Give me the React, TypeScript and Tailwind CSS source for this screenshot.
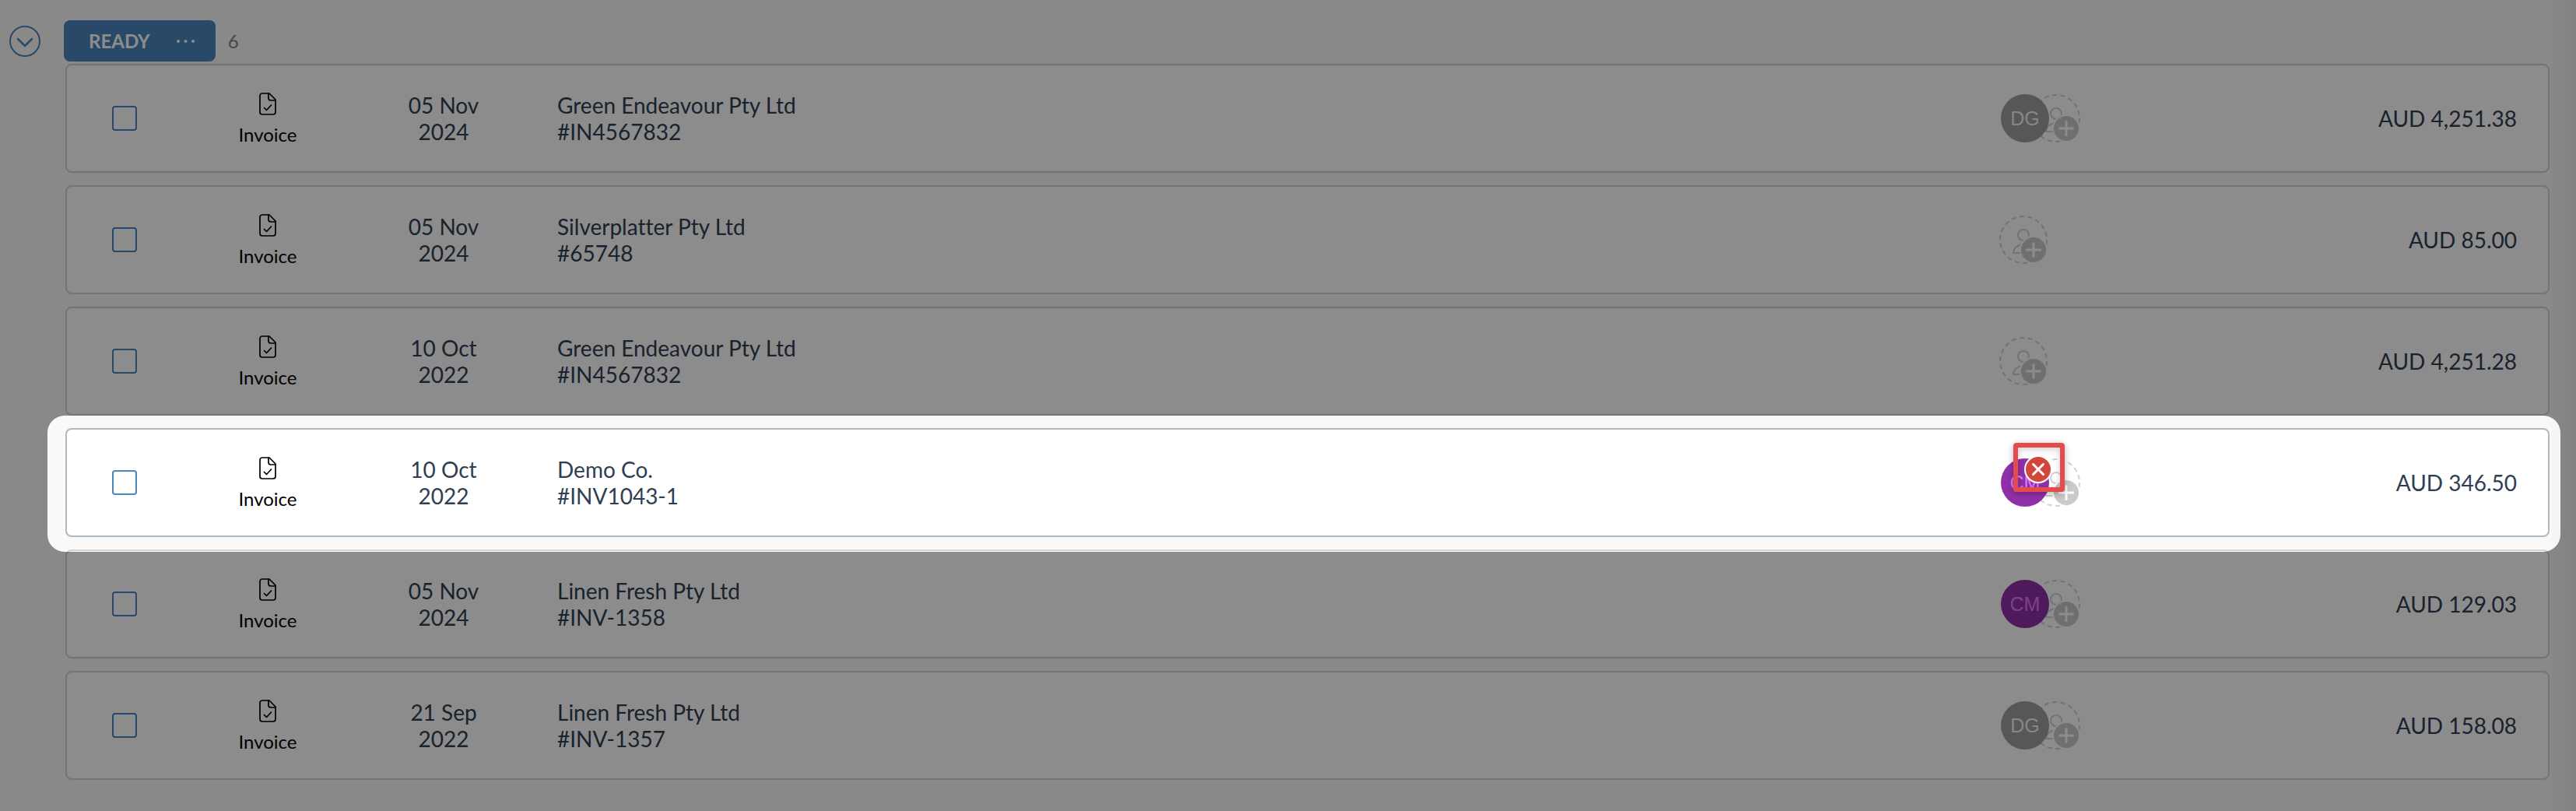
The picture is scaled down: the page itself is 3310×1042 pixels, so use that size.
type Person = { initials: string; tone: "gray" | "purple" };

type Item = {
  day: string;
  year: string;
  name: string;
  reference: string;
  amount: string;
  person?: Person;
  spotlight?: boolean;
};

const gray: Person = { initials: "DG", tone: "gray" };
const purple: Person = { initials: "CM", tone: "purple" };

const items: Item[] = [
  { day: "05 Nov", year: "2024", name: "Green Endeavour Pty Ltd", reference: "#IN4567832", amount: "AUD\u00a04,251.38", person: gray },
  { day: "05 Nov", year: "2024", name: "Silverplatter Pty Ltd", reference: "#65748", amount: "AUD\u00a085.00" },
  { day: "10 Oct", year: "2022", name: "Green Endeavour Pty Ltd", reference: "#IN4567832", amount: "AUD\u00a04,251.28" },
  { day: "10 Oct", year: "2022", name: "Demo Co.", reference: "#INV1043-1", amount: "AUD\u00a0346.50", person: purple, spotlight: true },
  { day: "05 Nov", year: "2024", name: "Linen Fresh Pty Ltd", reference: "#INV-1358", amount: "AUD\u00a0129.03", person: purple },
  { day: "21 Sep", year: "2022", name: "Linen Fresh Pty Ltd", reference: "#INV-1357", amount: "AUD\u00a0158.08", person: gray },
];

function InvoiceIcon() {
  return (
    <svg width="22" height="29" viewBox="0 0 22 29" fill="none" stroke="black" strokeWidth="1.7" strokeLinecap="round" strokeLinejoin="round" aria-hidden="true">
      <path d="M13 1H4a3 3 0 0 0-3 3v21a3 3 0 0 0 3 3h14a3 3 0 0 0 3-3V9z" />
      <path d="M12 1v6a3 3 0 0 0 3 3h6" />
      <path d="M6.500 19.500l3 3 6-6.500" />
    </svg>
  );
}

function AddPersonIcon() {
  return (
    <svg width="62" height="62" viewBox="0 0 62 62" fill="none" aria-hidden="true">
      <circle cx="31" cy="31" r="30" stroke="#cdd1d8" strokeWidth="2" strokeDasharray="6 4.470" />
      <circle cx="31" cy="25" r="7" stroke="#cdd1d8" strokeWidth="2" />
      <path d="M18 48a13 11 0 0 1 26 0z" stroke="#cdd1d8" strokeWidth="2" strokeLinejoin="round" />
      <circle cx="44" cy="44" r="18" fill="white" />
      <circle cx="44" cy="44" r="16" fill="#cacaca" />
      <path d="M44 35.500v17M35.500 44h17" stroke="white" strokeWidth="3" strokeLinecap="round" />
    </svg>
  );
}

function Assignees({ person, spotlight }: { person?: Person; spotlight?: boolean }) {
  return (
    <div className="relative flex items-center">
      {person && (
        <span
          className={
            "relative z-10 ml-0.5 -mr-[22px] flex size-[62px] items-center justify-center rounded-full font-['Liberation_Sans',sans-serif] text-[25px] " +
            (person.tone === "gray" ? "bg-[#9e9e9e] text-[#f5f5f5]" : "bg-[#9030a8] text-[#e07cf8]")
          }
        >
          {person.initials}
        </span>
      )}
      <button type="button" aria-label="Assign a person" className="block">
        <AddPersonIcon />
      </button>
      {spotlight && (
        <>
          <button type="button" aria-label={"Remove " + person?.initials} className="absolute -top-1 left-8 z-20">
            <svg width="36" height="36" viewBox="0 0 36 36" aria-hidden="true">
              <circle cx="18" cy="18" r="17" fill="#d2463c" stroke="white" strokeWidth="2" />
              <path d="M11.500 11.500l13 13M24.500 11.500l-13 13" stroke="white" strokeWidth="3" strokeLinecap="round" />
            </svg>
          </button>
          <span className="pointer-events-none absolute -top-5 left-[18px] z-30 h-[63px] w-[66px] rounded-[4px] border-6 border-[#e64a4c] shadow-[0_2px_8px_rgba(0,0,0,0.3),inset_0_2px_8px_rgba(0,0,0,0.2)]" />
        </>
      )}
    </div>
  );
}

function Row({ item }: { item: Item }) {
  return (
    <li className={item.spotlight ? "relative z-10" : "isolate"}>
      <div
        className={
          "grid min-h-[140px] grid-cols-[148px_220px_232px_minmax(0,1fr)_240px_465px] items-center rounded-lg border-2 bg-white text-[28px] leading-[34px] text-[#2f3e52] " +
          (item.spotlight ? "border-[#adb9c2]" : "border-[#cfd3da]")
        }
      >
        <input
          type="checkbox"
          aria-label={"Select " + item.name + " " + item.reference}
          className="size-8 appearance-none justify-self-center rounded-[4px] border-2 border-[#4a88be] checked:bg-[#4a88be]"
        />
        <div className="flex flex-col items-center gap-2.5 pt-0.5 text-[24px] leading-[29px] text-black">
          <InvoiceIcon />
          <span>Invoice</span>
        </div>
        <div className="text-center">
          <p>{item.day}</p>
          <p>{item.year}</p>
        </div>
        <div className="pl-[30px]">
          <p>{item.name}</p>
          <p>{item.reference}</p>
        </div>
        <Assignees person={item.person} spotlight={item.spotlight} />
        <p className="pr-10 text-right">{item.amount}</p>
      </div>
      {item.spotlight && (
        <div className="pointer-events-none absolute -top-4 -right-[14px] -bottom-[19px] -left-[23px] rounded-[22px] shadow-[0_0_0_4000px_rgba(0,0,0,0.45)]" />
      )}
    </li>
  );
}

export default function App() {
  return (
    <main className="relative min-h-screen overflow-hidden bg-[#fafafa] pt-[26px] pr-[34px] pb-10 pl-3 font-['Lato',sans-serif] [font-variant-ligatures:none]">
      <div className="pointer-events-none absolute inset-y-0 right-0 w-10 bg-linear-to-r from-transparent to-black/5" />
      <header className="flex items-center">
        <button type="button" aria-label="Collapse group">
          <svg width="40" height="40" viewBox="0 0 40 40" fill="none" stroke="#4a88be" strokeWidth="2" strokeLinecap="round" strokeLinejoin="round" aria-hidden="true">
            <circle cx="20" cy="20" r="19" />
            <path d="M11 17l9 9 9-9" strokeWidth="2.500" />
          </svg>
        </button>
        <button type="button" className="ml-[30px] flex h-[53px] items-center gap-[33px] rounded-lg bg-[#4a88be] pr-[27px] pl-8 text-[24px] font-bold text-white">
          READY
          <svg width="24" height="6" viewBox="0 0 24 6" fill="white" aria-hidden="true">
            <circle cx="3" cy="3" r="2" />
            <circle cx="12.500" cy="3" r="2" />
            <circle cx="22" cy="3" r="2" />
          </svg>
        </button>
        <span className="ml-4 text-[24px] text-[#7d8188]">6</span>
      </header>
      <ul className="mt-[3px] ml-[72px] flex flex-col gap-4">
        {items.map((item) => (
          <Row key={item.name + item.reference + item.day} item={item} />
        ))}
      </ul>
    </main>
  );
}
